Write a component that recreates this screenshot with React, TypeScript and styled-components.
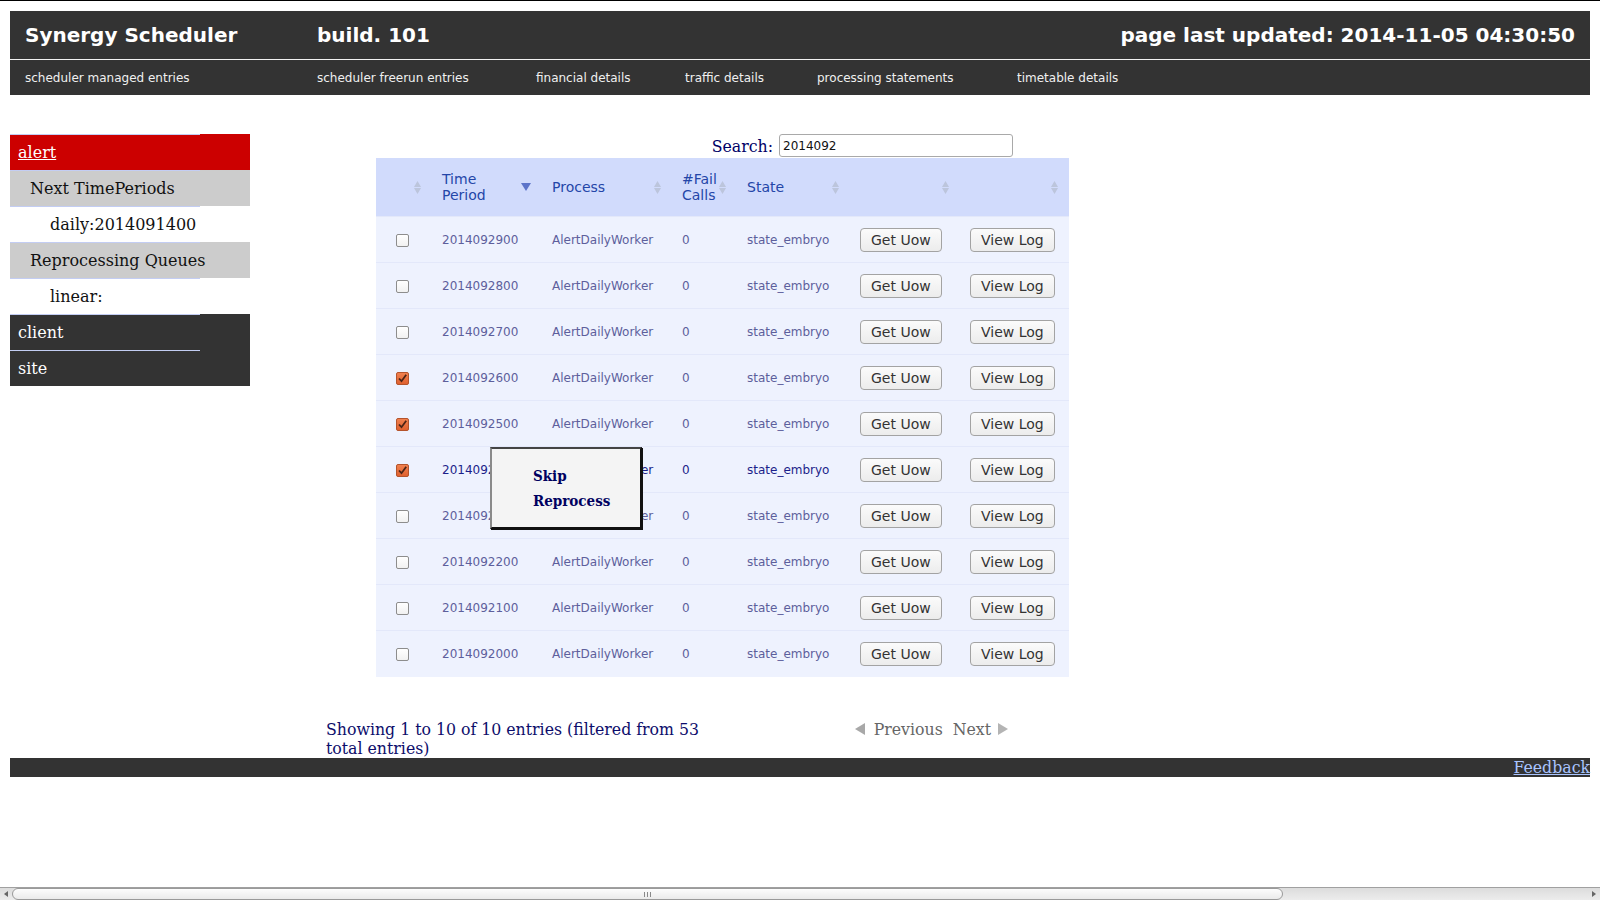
import React from "react";
import styled, { createGlobalStyle } from "styled-components";

const GlobalStyle = createGlobalStyle`
  html, body {
    margin: 0;
    padding: 0;
    background: #ffffff;
  }
  body {
    border-top: 1px solid #000;
    font-family: "DejaVu Serif", serif;
    overflow: hidden;
  }
`;

const serifCond = `"DejaVu Serif Condensed", "DejaVu Serif", serif`;
const serif = `"DejaVu Serif", serif`;
const sans = `"DejaVu Sans", "Liberation Sans", sans-serif`;

const Page = styled.div`
  padding: 10px 10px 0 10px;
`;

const Header = styled.header`
  background: #333333;
  color: #ffffff;
`;

const TitleBar = styled.div`
  height: 48px;
  display: flex;
  align-items: center;
  padding: 0 15px;
  font-family: ${sans};
  font-weight: bold;
  font-size: 20px;
  border-bottom: 1px solid #f2f2f2;
`;

const Title = styled.div<{ $width?: number }>`
  width: ${(p) => (p.$width ? `${p.$width}px` : "auto")};
  white-space: nowrap;
`;

const Updated = styled.div`
  margin-left: auto;
  white-space: nowrap;
`;

const Nav = styled.nav`
  height: 35px;
  display: flex;
  align-items: center;
  padding-left: 15px;
  font-family: ${sans};
  font-size: 12px;
`;

const NavItem = styled.a<{ $width?: number }>`
  width: ${(p) => (p.$width ? `${p.$width}px` : "auto")};
  color: #f0f0f0;
  text-decoration: none;
  white-space: nowrap;
`;

const Main = styled.div`
  display: flex;
  align-items: flex-start;
  margin-top: 39px;
`;

const Sidebar = styled.ul`
  width: 240px;
  margin: 0;
  padding: 0;
  list-style: none;
  font-family: ${serif};
  font-size: 16px;
`;

type Tone = "red" | "gray" | "white" | "dark";
const toneBg: Record<Tone, string> = {
  red: "#cc0000",
  gray: "#cccccc",
  white: "#ffffff",
  dark: "#333333",
};
const toneFg: Record<Tone, string> = {
  red: "#ffffff",
  gray: "#111111",
  white: "#111111",
  dark: "#ffffff",
};

const SideItem = styled.li<{ $tone: Tone; $indent: number }>`
  height: 35px;
  padding-top: 1px;
  padding-left: ${(p) => p.$indent}px;
  display: flex;
  align-items: center;
  background-color: ${(p) => toneBg[p.$tone]};
  background-image: linear-gradient(#c3cdf3, #c3cdf3);
  background-size: 190px 1px;
  background-repeat: no-repeat;
  background-position: top left;
  color: ${(p) => toneFg[p.$tone]};
`;

const SideLink = styled.a`
  color: #ffffff;
  text-decoration: underline;
`;

const Content = styled.div`
  position: relative;
  margin-left: 76px;
  width: 687px;
`;

const SearchRow = styled.div`
  display: flex;
  justify-content: flex-end;
  align-items: center;
  height: 23px;
  margin-bottom: 1px;
  font-family: ${serifCond};
  font-size: 17.5px;
  color: #000066;
`;

const SearchInput = styled.input`
  box-sizing: border-box;
  width: 234px;
  height: 23px;
  margin-left: 6px;
  padding: 1px 3px;
  border: 1px solid #a9a9a9;
  border-radius: 3px;
  font-family: ${sans};
  font-size: 12px;
  color: #111;
  background: #fff;
  outline: none;
`;

const Table = styled.table`
  margin-left: 50px;
  width: 693px;
  border-collapse: collapse;
  table-layout: fixed;
  font-family: ${sans};
`;

const Th = styled.th`
  height: 58px;
  padding: 0;
  background: #d1dbfc;
  text-align: left;
  font-weight: normal;
  font-size: 14px;
  line-height: 16.5px;
  color: #2446a8;
`;

const ThInner = styled.div`
  display: flex;
  align-items: center;
  justify-content: space-between;
  padding: 0 11px 0 10px;
`;

const Tr = styled.tr<{ $hover?: boolean }>`
  height: 46px;
  background: #eef2fe;
  border-top: 1px solid #e3e8fa;
  color: ${(p) => (p.$hover ? "#1c1f8a" : "#5d5f9c")};
`;

const Td = styled.td<{ $padLeft?: number }>`
  padding: 0 0 0 ${(p) => (p.$padLeft ?? 10)}px;
  font-size: 12px;
  white-space: nowrap;
  overflow: visible;
`;

const Button = styled.button`
  height: 24px;
  padding: 0 10px;
  border: 1px solid #a3a3a3;
  border-radius: 4px;
  background: linear-gradient(#fbfbfb, #ececec);
  font-family: ${sans};
  font-size: 14px;
  color: #333;
  white-space: nowrap;
  cursor: pointer;
`;

const Check = styled.span<{ $on?: boolean }>`
  box-sizing: border-box;
  display: inline-flex;
  align-items: center;
  justify-content: center;
  width: 13px;
  height: 13px;
  vertical-align: middle;
  border-radius: 2px;
  border: 1px solid ${(p) => (p.$on ? "#b5542c" : "#8d8d8d")};
  background: ${(p) =>
    p.$on ? "linear-gradient(#f0814f, #e0612f)" : "linear-gradient(#ffffff, #f1f1f1)"};
`;

const Menu = styled.div`
  position: absolute;
  left: 164px;
  top: 313px;
  box-sizing: border-box;
  width: 152px;
  height: 82px;
  padding: 15px 0 0 41px;
  background: #f4f4f4;
  border-top: 2px solid #444;
  border-left: 2px solid #8a8a8a;
  border-right: 2px solid #111;
  border-bottom: 2px solid #111;
  box-shadow: 1px 1px 0 #111;
  font-family: ${serifCond};
  font-weight: bold;
  font-size: 15px;
  line-height: 24.5px;
  color: #000060;
`;

const MenuItem = styled.div`
  cursor: pointer;
`;

const InfoRow = styled.div`
  display: flex;
  align-items: flex-start;
  margin-top: 43px;
  font-family: ${serifCond};
  font-size: 17.5px;
  line-height: 19px;
`;

const Info = styled.div`
  width: 400px;
  color: #0d0d6b;
`;

const Paginate = styled.div`
  margin-left: auto;
  padding-right: 5px;
  display: flex;
  align-items: center;
  color: #666666;
`;

const PageLink = styled.span<{ $gap: number }>`
  margin-left: ${(p) => p.$gap}px;
`;

const ArrowBox = styled.span<{ $gap: number }>`
  display: inline-flex;
  margin-left: ${(p) => p.$gap}px;
`;

const Footer = styled.footer`
  height: 19px;
  background: #333333;
  display: flex;
  justify-content: flex-end;
  align-items: center;
  font-family: ${serifCond};
  font-size: 17.5px;
`;

const FooterLink = styled.a`
  color: #a9c4ff;
  text-decoration: underline;
  line-height: 19px;
`;

const Scrollbar = styled.div`
  position: fixed;
  left: 0;
  right: 0;
  bottom: 0;
  height: 13px;
  display: flex;
  align-items: stretch;
  background: linear-gradient(#dcdcdc, #ececec);
  border-top: 1px solid #a0a0a0;
  box-sizing: border-box;
`;

const ScrollArrow = styled.div`
  width: 12px;
  display: flex;
  align-items: center;
  justify-content: center;
`;

const ScrollThumb = styled.div`
  width: 1271px;
  box-sizing: border-box;
  border: 1px solid #9a9a9a;
  border-radius: 6px;
  background: linear-gradient(#fdfdfd, #ebebeb);
  display: flex;
  align-items: center;
  justify-content: center;
`;

const ScrollRest = styled.div`
  flex: 1;
`;

const Grip = styled.div`
  display: flex;
  gap: 2px;
  & > span {
    width: 1px;
    height: 5px;
    background: #8a8a8a;
  }
`;

const SortBoth = () => (
  <svg width="7" height="13" viewBox="0 0 7 13">
    <polygon points="3.5,0 7,6 0,6" fill="#bcc5dc" />
    <polygon points="0,7 7,7 3.5,13" fill="#bcc5dc" />
  </svg>
);

const SortDesc = () => (
  <svg width="10" height="8" viewBox="0 0 10 8">
    <polygon points="0,0 10,0 5,8" fill="#5d74c9" />
  </svg>
);

const CheckMark = () => (
  <svg width="9" height="9" viewBox="0 0 9 9">
    <path d="M1 4.5 L3.5 7.2 L8.2 0.8" stroke="#4b2416" strokeWidth="1.8" fill="none" />
  </svg>
);

const Arrow = ({ dir, color }: { dir: "left" | "right"; color: string }) => (
  <svg width="10" height="12" viewBox="0 0 10 12">
    {dir === "left" ? (
      <polygon points="10,0 10,12 0,6" fill={color} />
    ) : (
      <polygon points="0,0 0,12 10,6" fill={color} />
    )}
  </svg>
);

const TinyArrow = ({ dir }: { dir: "left" | "right" }) => (
  <svg width="4" height="6" viewBox="0 0 4 6">
    {dir === "left" ? (
      <polygon points="4,0 4,6 0,3" fill="#666" />
    ) : (
      <polygon points="0,0 0,6 4,3" fill="#666" />
    )}
  </svg>
);

const navItems: { label: string; width?: number }[] = [
  { label: "scheduler managed entries", width: 292 },
  { label: "scheduler freerun entries", width: 219 },
  { label: "financial details", width: 149 },
  { label: "traffic details", width: 132 },
  { label: "processing statements", width: 200 },
  { label: "timetable details" },
];

const rows = [
  { tp: "2014092900", on: false },
  { tp: "2014092800", on: false },
  { tp: "2014092700", on: false },
  { tp: "2014092600", on: true },
  { tp: "2014092500", on: true },
  { tp: "2014092400", on: true, hover: true },
  { tp: "2014092300", on: false },
  { tp: "2014092200", on: false },
  { tp: "2014092100", on: false },
  { tp: "2014092000", on: false },
];

const colWidths = [56, 110, 130, 65, 113, 110, 109];

export default function App() {
  return (
    <>
      <GlobalStyle />
      <Page>
        <Header>
          <TitleBar>
            <Title $width={292}>Synergy Scheduler</Title>
            <Title>build. 101</Title>
            <Updated>page last updated: 2014-11-05 04:30:50</Updated>
          </TitleBar>
          <Nav>
            {navItems.map((n) => (
              <NavItem key={n.label} $width={n.width} href="#">
                {n.label}
              </NavItem>
            ))}
          </Nav>
        </Header>

        <Main>
          <Sidebar>
            <SideItem $tone="red" $indent={8}>
              <SideLink href="#">alert</SideLink>
            </SideItem>
            <SideItem $tone="gray" $indent={20}>
              Next TimePeriods
            </SideItem>
            <SideItem $tone="white" $indent={40}>
              daily:2014091400
            </SideItem>
            <SideItem $tone="gray" $indent={20}>
              Reprocessing Queues
            </SideItem>
            <SideItem $tone="white" $indent={40}>
              linear:
            </SideItem>
            <SideItem $tone="dark" $indent={8}>
              client
            </SideItem>
            <SideItem $tone="dark" $indent={8}>
              site
            </SideItem>
          </Sidebar>

          <Content>
            <SearchRow>
              Search:
              <SearchInput defaultValue="2014092" />
            </SearchRow>
            <Table>
              <colgroup>
                {colWidths.map((w, i) => (
                  <col key={i} style={{ width: w }} />
                ))}
              </colgroup>
              <thead>
                <tr>
                  <Th>
                    <ThInner>
                      <span />
                      <SortBoth />
                    </ThInner>
                  </Th>
                  <Th>
                    <ThInner>
                      <span>
                        Time
                        <br />
                        Period
                      </span>
                      <SortDesc />
                    </ThInner>
                  </Th>
                  <Th>
                    <ThInner>
                      <span>Process</span>
                      <SortBoth />
                    </ThInner>
                  </Th>
                  <Th>
                    <ThInner>
                      <span>
                        #Fail
                        <br />
                        Calls
                      </span>
                      <SortBoth />
                    </ThInner>
                  </Th>
                  <Th>
                    <ThInner>
                      <span>State</span>
                      <SortBoth />
                    </ThInner>
                  </Th>
                  <Th>
                    <ThInner>
                      <span />
                      <SortBoth />
                    </ThInner>
                  </Th>
                  <Th>
                    <ThInner>
                      <span />
                      <SortBoth />
                    </ThInner>
                  </Th>
                </tr>
              </thead>
              <tbody>
                {rows.map((r) => (
                  <Tr key={r.tp} $hover={r.hover}>
                    <Td $padLeft={20}>
                      <Check $on={r.on}>{r.on && <CheckMark />}</Check>
                    </Td>
                    <Td>{r.tp}</Td>
                    <Td>AlertDailyWorker</Td>
                    <Td>0</Td>
                    <Td>state_embryo</Td>
                    <Td>
                      <Button>Get Uow</Button>
                    </Td>
                    <Td>
                      <Button>View Log</Button>
                    </Td>
                  </Tr>
                ))}
              </tbody>
            </Table>

            <Menu>
              <MenuItem>Skip</MenuItem>
              <MenuItem>Reprocess</MenuItem>
            </Menu>

            <InfoRow>
              <Info>Showing 1 to 10 of 10 entries (filtered from 53 total entries)</Info>
              <Paginate>
                <ArrowBox $gap={0}>
                  <Arrow dir="left" color="#a8a8a8" />
                </ArrowBox>
                <PageLink $gap={9}>Previous</PageLink>
                <PageLink $gap={10}>Next</PageLink>
                <ArrowBox $gap={7}>
                  <Arrow dir="right" color="#b4b4b4" />
                </ArrowBox>
              </Paginate>
            </InfoRow>
          </Content>
        </Main>

        <Footer>
          <FooterLink href="#">Feedback</FooterLink>
        </Footer>
      </Page>

      <Scrollbar>
        <ScrollArrow>
          <TinyArrow dir="left" />
        </ScrollArrow>
        <ScrollThumb>
          <Grip>
            <span />
            <span />
            <span />
          </Grip>
        </ScrollThumb>
        <ScrollRest />
        <ScrollArrow>
          <TinyArrow dir="right" />
        </ScrollArrow>
      </Scrollbar>
    </>
  );
}
